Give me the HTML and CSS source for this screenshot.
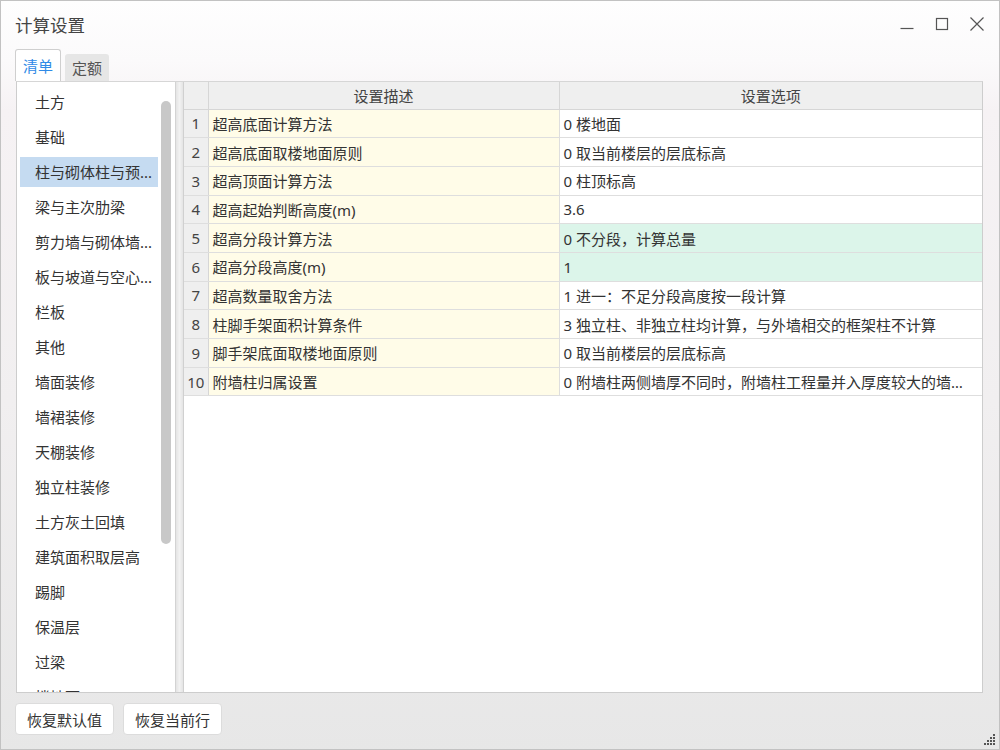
FILE: index.html
```html
<!DOCTYPE html>
<html lang="zh">
<head>
<meta charset="utf-8">
<title>计算设置</title>
<link rel="stylesheet" href="styles.css">
</head>
<body>
<div class="window">
  <div class="titlebar">
    <div class="title">计算设置</div>
    <div class="controls">
      <svg class="ctl" width="16" height="16" viewBox="0 0 16 16"><path d="M1.5 12.5h13" stroke="#555" stroke-width="1.2" fill="none"/></svg>
      <svg class="ctl" width="16" height="16" viewBox="0 0 16 16"><rect x="2.5" y="2.5" width="11" height="11" stroke="#555" stroke-width="1.2" fill="none"/></svg>
      <svg class="ctl" width="16" height="16" viewBox="0 0 16 16"><path d="M1.5 1.5l13 13M14.5 1.5l-13 13" stroke="#555" stroke-width="1.2" fill="none"/></svg>
    </div>
  </div>
  <div class="tabs">
    <div class="tab active">清单</div>
    <div class="tab">定额</div>
  </div>
  <div class="main">
    <div class="sidebar">
      <ul class="list">
        <li>土方</li>
        <li>基础</li>
        <li class="selected">柱与砌体柱与预...</li>
        <li>梁与主次肋梁</li>
        <li>剪力墙与砌体墙...</li>
        <li>板与坡道与空心...</li>
        <li>栏板</li>
        <li>其他</li>
        <li>墙面装修</li>
        <li>墙裙装修</li>
        <li>天棚装修</li>
        <li>独立柱装修</li>
        <li>土方灰土回填</li>
        <li>建筑面积取层高</li>
        <li>踢脚</li>
        <li>保温层</li>
        <li>过梁</li>
        <li>楼地面</li>
      </ul>
      <div class="scrolltrack"><div class="thumb"></div></div>
    </div>
    <div class="splitter"></div>
    <div class="grid-panel">
      <table class="grid">
        <colgroup><col class="c-num"><col class="c-desc"><col></colgroup>
        <thead>
          <tr><th></th><th>设置描述</th><th>设置选项</th></tr>
        </thead>
        <tbody>
          <tr><td class="num">1</td><td class="desc">超高底面计算方法</td><td>0 楼地面</td></tr>
          <tr><td class="num">2</td><td class="desc">超高底面取楼地面原则</td><td>0 取当前楼层的层底标高</td></tr>
          <tr><td class="num">3</td><td class="desc">超高顶面计算方法</td><td>0 柱顶标高</td></tr>
          <tr><td class="num">4</td><td class="desc">超高起始判断高度(m)</td><td>3.6</td></tr>
          <tr class="hl"><td class="num">5</td><td class="desc">超高分段计算方法</td><td>0 不分段，计算总量</td></tr>
          <tr class="hl"><td class="num">6</td><td class="desc">超高分段高度(m)</td><td>1</td></tr>
          <tr><td class="num">7</td><td class="desc">超高数量取舍方法</td><td>1 进一：不足分段高度按一段计算</td></tr>
          <tr><td class="num">8</td><td class="desc">柱脚手架面积计算条件</td><td>3 独立柱、非独立柱均计算，与外墙相交的框架柱不计算</td></tr>
          <tr><td class="num">9</td><td class="desc">脚手架底面取楼地面原则</td><td>0 取当前楼层的层底标高</td></tr>
          <tr><td class="num">10</td><td class="desc">附墙柱归属设置</td><td>0 附墙柱两侧墙厚不同时，附墙柱工程量并入厚度较大的墙体计算</td></tr>
        </tbody>
      </table>
    </div>
  </div>
  <div class="footer">
    <button class="btn">恢复默认值</button>
    <button class="btn">恢复当前行</button>
    <svg class="grip" width="12" height="12" viewBox="0 0 12 12">
      <g fill="#555">
        <rect x="9" y="0" width="2" height="2"/>
        <rect x="6" y="3" width="2" height="2"/><rect x="9" y="3" width="2" height="2"/>
        <rect x="3" y="6" width="2" height="2"/><rect x="6" y="6" width="2" height="2"/><rect x="9" y="6" width="2" height="2"/>
        <rect x="0" y="9" width="2" height="2"/><rect x="3" y="9" width="2" height="2"/><rect x="6" y="9" width="2" height="2"/><rect x="9" y="9" width="2" height="2"/>
      </g>
    </svg>
  </div>
</div>
</body>
</html>
```
FILE: styles.css
```css
* { box-sizing: border-box; }
html, body { margin: 0; padding: 0; }
body {
  width: 1000px;
  height: 750px;
  font-family: "Noto Sans", "Noto Sans CJK SC", sans-serif;
  font-size: 15px;
  color: #333;
  overflow: hidden;
}
.window {
  width: 1000px;
  height: 750px;
  border: 1px solid #c2c2c2;
  display: flex;
  flex-direction: column;
  background: linear-gradient(180deg, #fefefe 0px, #fbfafb 60px, #f6f2f4 110px, #f1eff0 400px, #e7e7e7 750px);
}
.titlebar {
  height: 48px;
  flex: none;
  display: flex;
  align-items: center;
  justify-content: space-between;
  padding: 0 14px 0 14px;
}
.title {
  font-size: 17.5px;
  color: #444;
  margin-top: -1px;
}
.controls {
  display: flex;
  gap: 19px;
  align-items: center;
  margin-top: -3px;
}
.ctl { display: block; }
.tabs {
  height: 32px;
  flex: none;
  display: flex;
  align-items: flex-end;
  padding-left: 14px;
  gap: 4px;
}
.tab {
  height: 27px;
  padding: 0 7px;
  display: flex;
  align-items: center;
  background: #e6e6e6;
  color: #555;
  border-radius: 3px 3px 0 0;
  font-size: 15px;
}
.tab.active {
  height: 32px;
  background: #fff;
  color: #2f8ae6;
  border: 1px solid #cfcfcf;
  border-bottom: none;
  padding: 0 7px;
}
.main {
  flex: none;
  height: 612px;
  margin: 0 16px 0 15px;
  display: flex;
  background: #ececec;
  border: 1px solid #cdcdcd;
  border-top-color: #d6d6d6;
}
.sidebar {
  width: 159px;
  flex: none;
  background: #fff;
  border-right: 1px solid #d3d3d3;
  display: flex;
  overflow: hidden;
}
.list {
  list-style: none;
  margin: 0;
  padding: 5px 0 0 3px;
  width: 141px;
  flex: none;
}
.list li {
  height: 30px;
  margin-bottom: 5px;
  padding-left: 15px;
  line-height: 30px;
  white-space: nowrap;
  color: #333;
}
.list li.selected {
  background: #c5dbf1;
}
.scrolltrack {
  flex: none;
  width: 18px;
  padding: 19px 0 0 3px;
}
.thumb {
  width: 10px;
  height: 443px;
  border-radius: 5px;
  background: #c8c8c8;
}
.splitter {
  width: 7px;
  flex: none;
  background: linear-gradient(90deg, #e4e4e4, #f2f2f2 50%, #e4e4e4);
}
.grid-panel {
  flex: 1;
  background: #fff;
  border-left: 1px solid #d0d0d0;
  overflow: hidden;
}
.grid {
  width: 100%;
  table-layout: fixed;
  border-collapse: collapse;
}
.c-num { width: 24px; }
.c-desc { width: 351px; }
.grid th {
  height: 27px;
  background: #efefef;
  font-weight: normal;
  color: #444;
  border-right: 1px solid #d6d6d6;
  border-bottom: 1px solid #d6d6d6;
  padding: 0;
  font-size: 15px;
}
.grid th:last-child { border-right: none; }
.grid td {
  height: 28.7px;
  padding: 0 4px;
  border-right: 1px solid #dedede;
  border-bottom: 1px solid #dedede;
  white-space: nowrap;
  overflow: hidden;
  text-overflow: ellipsis;
  color: #333;
}
.grid td:last-child { border-right: none; padding-right: 14px; }
.grid td.num {
  background: #efefef;
  text-align: center;
  padding: 0;
  color: #444;
  border-right-color: #d6d6d6;
}
.grid td.desc { background: #fffce8; }
.grid tr.hl td:last-child { background: #dcf5ea; }
.footer {
  flex: 1;
  display: flex;
  align-items: flex-start;
  padding: 10px 0 0 14px;
  gap: 9px;
  position: relative;
}
.btn {
  height: 32px;
  padding: 0 11px;
  background: #fff;
  border: 1px solid #dcdcdc;
  border-radius: 4px;
  font-family: inherit;
  font-size: 15px;
  color: #333;
}
.grip {
  position: absolute;
  right: 3px;
  bottom: 3px;
}
```
